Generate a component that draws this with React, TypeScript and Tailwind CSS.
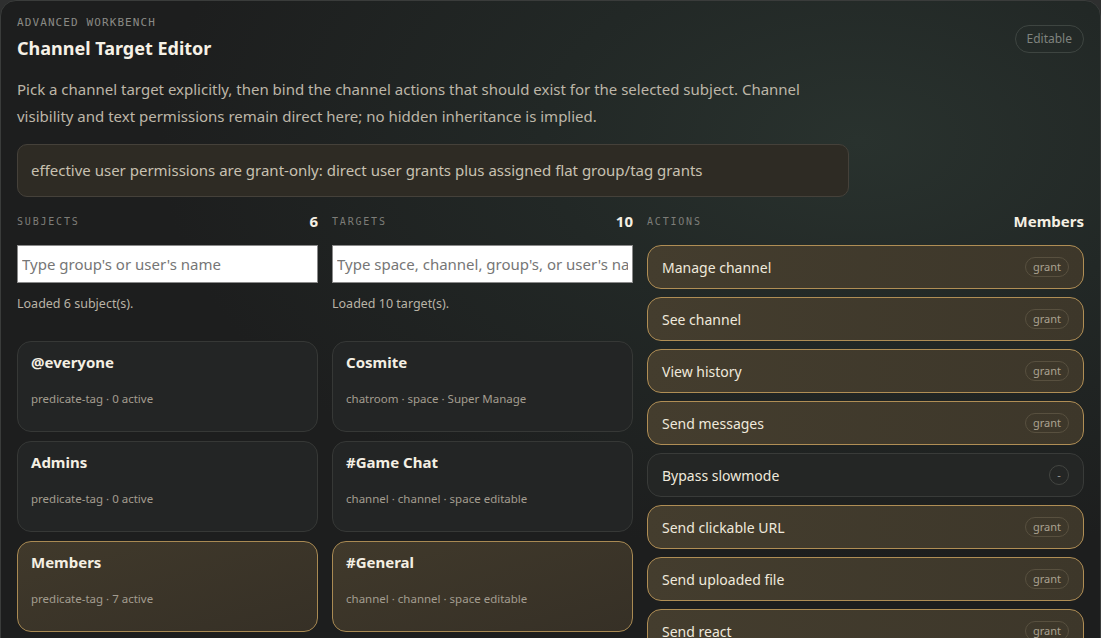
import React from 'react';

type Subject = { name: string; meta: string; selected?: boolean };
type Action = { label: string; state: 'grant' | 'none' };

const subjects: Subject[] = [
  { name: '@everyone', meta: 'predicate-tag · 0 active' },
  { name: 'Admins', meta: 'predicate-tag · 0 active' },
  { name: 'Members', meta: 'predicate-tag · 7 active', selected: true },
];

const targets: Subject[] = [
  { name: 'Cosmite', meta: 'chatroom · space · Super Manage' },
  { name: '#Game Chat', meta: 'channel · channel · space editable' },
  { name: '#General', meta: 'channel · channel · space editable', selected: true },
];

const actions: Action[] = [
  { label: 'Manage channel', state: 'grant' },
  { label: 'See channel', state: 'grant' },
  { label: 'View history', state: 'grant' },
  { label: 'Send messages', state: 'grant' },
  { label: 'Bypass slowmode', state: 'none' },
  { label: 'Send clickable URL', state: 'grant' },
  { label: 'Send uploaded file', state: 'grant' },
  { label: 'Send react', state: 'grant' },
];

const sans = "font-['Noto_Sans','Open_Sans',sans-serif]";
const mono = "font-['DejaVu_Sans_Mono','Liberation_Mono',monospace]";

function ColumnHeader({ label, right }: { label: string; right: string }) {
  return (
    <div className="flex h-[20px] items-center justify-between">
      <span className={`${mono} text-[10px] uppercase tracking-[0.18em] text-[#7d7d78]`}>{label}</span>
      <span className="text-[15px] font-bold leading-5 text-[#f4efe3]">{right}</span>
    </div>
  );
}

function EntityCard({ item }: { item: Subject }) {
  return (
    <div
      className={
        item.selected
          ? 'h-[91px] rounded-[14px] border border-[#a98a53] bg-gradient-to-br from-[#40392b] to-[#363026] px-[13px] pt-[11px]'
          : 'h-[91px] rounded-[14px] border border-[#363836] bg-[#232525] px-[13px] pt-[11px]'
      }>
      <div className="text-[15px] font-bold leading-[18px] text-[#f4efe3]">{item.name}</div>
      <div className="mt-[20px] text-[11.5px] leading-4 text-[#a39d90]">{item.meta}</div>
    </div>
  );
}

function ActionRow({ action }: { action: Action }) {
  const on = action.state === 'grant';
  return (
    <div
      className={
        on
          ? 'flex h-[44px] shrink-0 items-center justify-between rounded-[14px] border border-[#b08e55] bg-gradient-to-r from-[#443d2e] to-[#3d372a] px-[14px]'
          : 'flex h-[44px] shrink-0 items-center justify-between rounded-[14px] border border-[#393b39] bg-[#242625] px-[14px]'
      }>
      <span className="text-[14px] text-[#efe9dc]">{action.label}</span>
      {on ?
      <span className="flex h-[20px] items-center rounded-full border border-[#58503f] px-[7px] text-[11px] text-[#aba291]">
          grant
        </span> :

      <span className="flex h-[20px] w-[20px] items-center justify-center rounded-full border border-[#434541] text-[11px] text-[#9a9a95]">
          -
        </span>
      }
    </div>
  );
}

export default function App() {
  return (
    <div className={`${sans} h-[638px] overflow-hidden bg-[#2e2f2f]`}>
      <div className="relative h-[700px] rounded-t-[16px] border border-[#3a3c3b] bg-[#1d1e1e] bg-[radial-gradient(ellipse_700px_420px_at_78%_20%,#29322e_0%,#222826_45%,#1d1e1e_100%)] px-4 pt-[15px]">
        <div className="flex items-start justify-between">
          <div>
            <div className={`${mono} text-[11px] uppercase leading-[14px] tracking-[0.1em] text-[#8a8a85]`}>
              Advanced workbench
            </div>
            <h1 className="mt-[6px] text-[18px] font-bold leading-6 text-[#f6f1e6]">Channel Target Editor</h1>
          </div>
          <span className="mt-[9px] flex h-[28px] items-center rounded-full border border-[#3e4541] px-[11px] text-[12px] text-[#7f837e]">
            Editable
          </span>
        </div>

        <p className="mt-[16px] max-w-[800px] text-[15px] leading-[27px] text-[#bdb6a8]">
          Pick a channel target explicitly, then bind the channel actions that should exist for the selected subject. Channel
          visibility and text permissions remain direct here; no hidden inheritance is implied.
        </p>

        <div className="mt-[14px] flex h-[53px] w-[832px] items-center rounded-[10px] border border-[#45413a] bg-[#2e2b24] px-[13px] text-[15px] text-[#c8c1b1]">
          effective user permissions are grant-only: direct user grants plus assigned flat group/tag grants
        </div>

        <div className="mt-[14px] grid grid-cols-[301px_301px_1fr] gap-x-[14px]">
          <div className="flex flex-col">
            <ColumnHeader label="Subjects" right="6" />
            <input
              className="mt-[14px] h-[38px] border border-[#8a8a8a] bg-white px-[4px] text-[15px] text-[#222] placeholder:text-[#767676] outline-none"
              placeholder="Type group's or user's name" />

            <div className="mt-[13px] text-[12.5px] leading-4 text-[#b9b3a6]">Loaded 6 subject(s).</div>
            <div className="mt-[29px] flex flex-col gap-[9px]">
              {subjects.map((s) =>
              <EntityCard key={s.name} item={s} />
              )}
            </div>
          </div>

          <div className="flex flex-col">
            <ColumnHeader label="Targets" right="10" />
            <input
              className="mt-[14px] h-[38px] border border-[#8a8a8a] bg-white px-[4px] text-[15px] text-[#222] placeholder:text-[#767676] outline-none"
              placeholder="Type space, channel, group's, or user's name" />

            <div className="mt-[13px] text-[12.5px] leading-4 text-[#b9b3a6]">Loaded 10 target(s).</div>
            <div className="mt-[29px] flex flex-col gap-[9px]">
              {targets.map((t) =>
              <EntityCard key={t.name} item={t} />
              )}
            </div>
          </div>

          <div className="flex flex-col">
            <ColumnHeader label="Actions" right="Members" />
            <div className="mt-[14px] flex flex-col gap-[8px]">
              {actions.map((a) =>
              <ActionRow key={a.label} action={a} />
              )}
            </div>
          </div>
        </div>
      </div>
    </div>);

}
